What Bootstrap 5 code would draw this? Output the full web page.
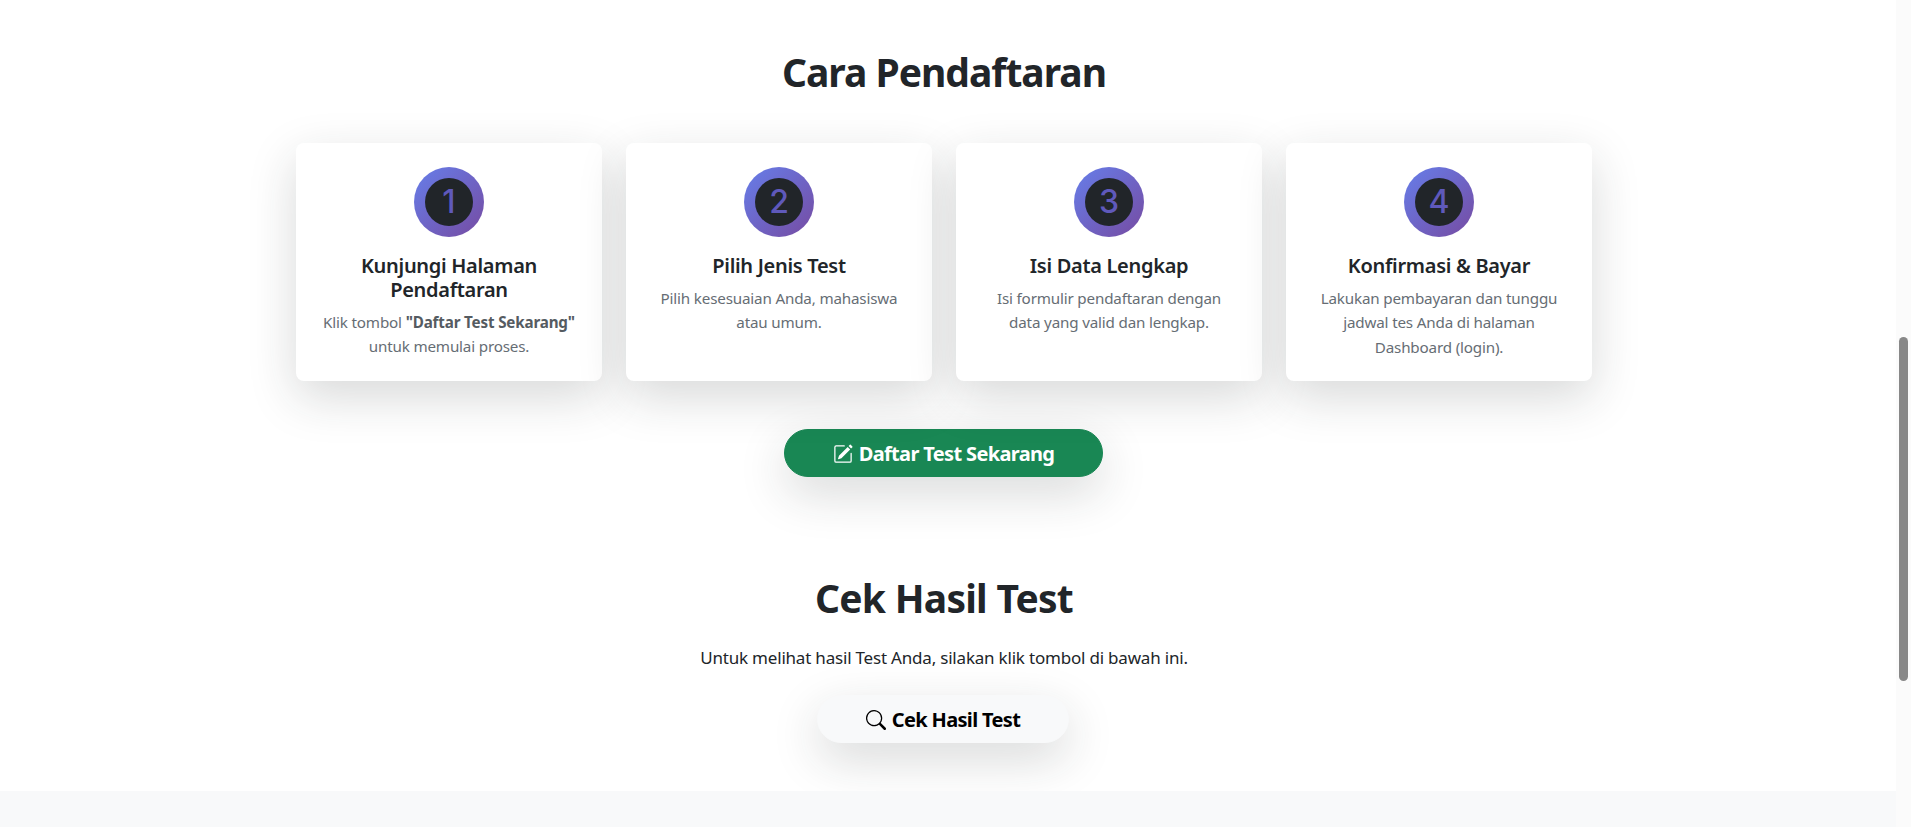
<!DOCTYPE html>
<html lang="id">
<head>
<meta charset="utf-8">
<title>Cara Pendaftaran</title>
<link rel="stylesheet" href="https://cdn.jsdelivr.net/npm/bootstrap@5.3.0/dist/css/bootstrap.min.css">
<style>
html,body{height:100%;overflow:hidden}
body{font-family:"Noto Sans","Open Sans",sans-serif;color:#212529;background:#fff}
.page-main{height:827px;overflow:hidden}
.page-content{padding-right:8px}
.sect-one{padding-top:48px}
.sect-two{padding-top:97px}
.sect-title{font-size:39px;font-weight:700;line-height:48px;letter-spacing:-1px;margin-bottom:47px}
.sect-two .sect-title{margin-bottom:24px;letter-spacing:-.75px}
.sect-two p{font-size:17px;line-height:24px;letter-spacing:-.2px;margin-bottom:25px}
.step-box{border-radius:8px;height:238px}
.step-ring{width:70px;height:70px;background:linear-gradient(135deg,#667eea,#764ba2);margin:0 auto 17px}
.step-num{width:48px;height:48px;background:#212529;color:#5f59bb;font-family:"Inter","Liberation Sans",sans-serif;font-size:32px;font-weight:500;line-height:48px}
.step-title{font-size:20px;font-weight:600;line-height:24px;letter-spacing:-.3px;margin-bottom:8px}
.step-text{font-size:15.2px;line-height:24.3px;color:#666d74;letter-spacing:-.17px}
.step-text strong{font-weight:700;color:#555b61}
.act-btn{height:48px;padding-top:8px;font-size:20px;font-weight:700;line-height:30px;letter-spacing:-.65px;display:inline-flex;align-items:center;justify-content:center;gap:6px}
.act-green{width:319px;margin-right:1px}
.act-light{width:252px;margin-right:2px;color:#000;background:#f8f9fa;border-color:#f8f9fa}
.act-btn svg{width:20px;height:20px;flex:none;margin-top:-1px}
.foot-band{height:36px;background:#f8f9fa}
.fake-track{width:15px;height:827px;background:#fbfbfb;flex:none}
.fake-thumb{width:9px;height:344px;margin:337px 0 0 3px;background:#888;border-radius:5px}
</style>
</head>
<body>
<div class="d-flex">
  <main class="page-main flex-grow-1 d-flex flex-column">
    <div class="page-content flex-grow-1">
      <section class="sect-one text-center">
        <div class="container">
          <h2 class="sect-title">Cara Pendaftaran</h2>
          <div class="row g-4">
            <div class="col-3"><div class="card border-0 shadow-lg step-box px-4 pt-4">
              <div class="step-ring flex-shrink-0 rounded-circle d-flex align-items-center justify-content-center"><div class="step-num rounded-circle">1</div></div>
              <h5 class="step-title">Kunjungi Halaman Pendaftaran</h5>
              <p class="step-text mb-0">Klik tombol <strong>"Daftar Test Sekarang"</strong> untuk memulai proses.</p>
            </div></div>
            <div class="col-3"><div class="card border-0 shadow-lg step-box px-4 pt-4">
              <div class="step-ring flex-shrink-0 rounded-circle d-flex align-items-center justify-content-center"><div class="step-num rounded-circle">2</div></div>
              <h5 class="step-title">Pilih Jenis Test</h5>
              <p class="step-text mb-0">Pilih kesesuaian Anda, mahasiswa atau umum.</p>
            </div></div>
            <div class="col-3"><div class="card border-0 shadow-lg step-box px-4 pt-4">
              <div class="step-ring flex-shrink-0 rounded-circle d-flex align-items-center justify-content-center"><div class="step-num rounded-circle">3</div></div>
              <h5 class="step-title">Isi Data Lengkap</h5>
              <p class="step-text mb-0">Isi formulir pendaftaran dengan data yang valid dan lengkap.</p>
            </div></div>
            <div class="col-3"><div class="card border-0 shadow-lg step-box px-4 pt-4">
              <div class="step-ring flex-shrink-0 rounded-circle d-flex align-items-center justify-content-center"><div class="step-num rounded-circle">4</div></div>
              <h5 class="step-title">Konfirmasi &amp; Bayar</h5>
              <p class="step-text mb-0">Lakukan pembayaran dan tunggu jadwal tes Anda di halaman Dashboard (login).</p>
            </div></div>
          </div>
          <div class="mt-5">
            <a href="#" class="btn btn-success rounded-pill shadow-lg act-btn act-green">
              <svg viewBox="0 0 16 16" fill="currentColor"><path d="M15.502 1.94a.5.5 0 0 1 0 .706L14.459 3.69l-2-2L13.502.646a.5.5 0 0 1 .707 0l1.293 1.293zm-1.75 2.456-2-2L4.939 9.21a.5.5 0 0 0-.121.196l-.805 2.414a.25.25 0 0 0 .316.316l2.414-.805a.5.5 0 0 0 .196-.12l6.813-6.814z"/><path fill-rule="evenodd" d="M1 13.5A1.5 1.5 0 0 0 2.5 15h11a1.5 1.5 0 0 0 1.5-1.5v-6a.5.5 0 0 0-1 0v6a.5.5 0 0 1-.5.5h-11a.5.5 0 0 1-.5-.5v-11a.5.5 0 0 1 .5-.5H9a.5.5 0 0 0 0-1H2.5A1.5 1.5 0 0 0 1 2.5v11z"/></svg>
              Daftar Test Sekarang
            </a>
          </div>
        </div>
      </section>
      <section class="sect-two text-center">
        <div class="container">
          <h2 class="sect-title">Cek Hasil Test</h2>
          <p>Untuk melihat hasil Test Anda, silakan klik tombol di bawah ini.</p>
          <a href="#" class="btn rounded-pill shadow-lg act-btn act-light">
            <svg viewBox="0 0 16 16" fill="currentColor"><path d="M11.742 10.344a6.5 6.5 0 1 0-1.397 1.398h-.001c.03.04.062.078.098.115l3.85 3.85a1 1 0 0 0 1.415-1.414l-3.85-3.85a1.007 1.007 0 0 0-.115-.1zM12 6.5a5.5 5.5 0 1 1-11 0 5.5 5.5 0 0 1 11 0z"/></svg>
            Cek Hasil Test
          </a>
        </div>
      </section>
    </div>
    <div class="foot-band"></div>
  </main>
  <aside class="fake-track"><div class="fake-thumb"></div></aside>
</div>
<script src="https://cdn.jsdelivr.net/npm/bootstrap@5.3.0/dist/js/bootstrap.bundle.min.js"></script>
</body>
</html>
